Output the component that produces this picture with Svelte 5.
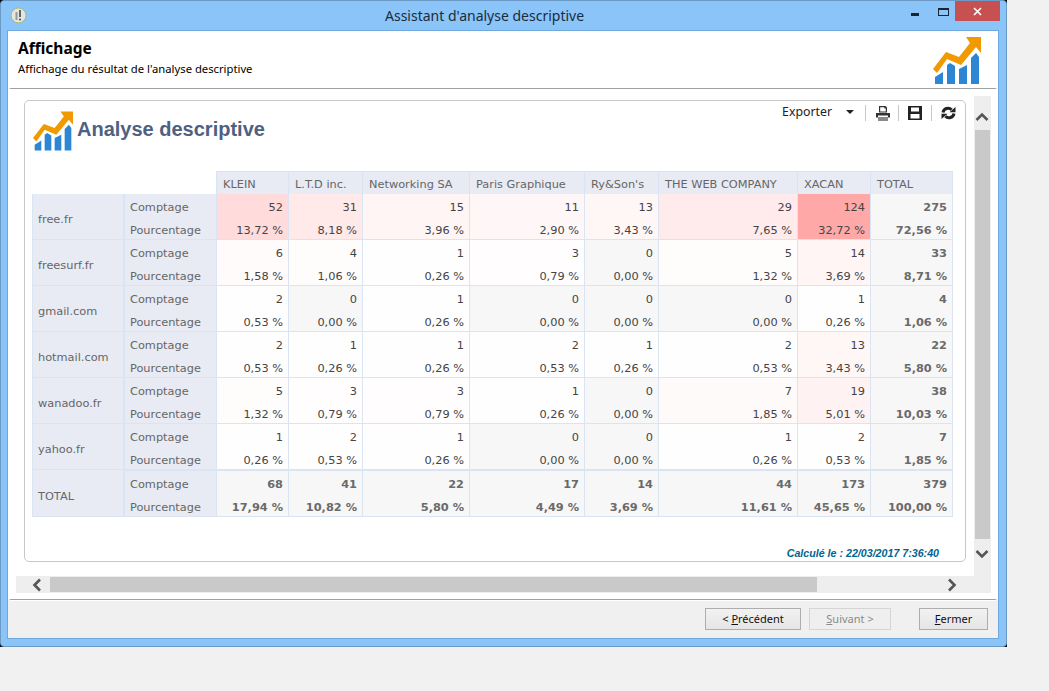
<script>
  const columns = ['KLEIN', 'L.T.D inc.', 'Networking SA', 'Paris Graphique', "Ry&Son's", 'THE WEB COMPANY', 'XACAN', 'TOTAL'];
  const rows = [
    { name: 'free.fr', count: [52, 31, 15, 11, 13, 29, 124, 275], pct: ['13,72', '8,18', '3,96', '2,90', '3,43', '7,65', '32,72', '72,56'] },
    { name: 'freesurf.fr', count: [6, 4, 1, 3, 0, 5, 14, 33], pct: ['1,58', '1,06', '0,26', '0,79', '0,00', '1,32', '3,69', '8,71'] },
    { name: 'gmail.com', count: [2, 0, 1, 0, 0, 0, 1, 4], pct: ['0,53', '0,00', '0,26', '0,00', '0,00', '0,00', '0,26', '1,06'] },
    { name: 'hotmail.com', count: [2, 1, 1, 2, 1, 2, 13, 22], pct: ['0,53', '0,26', '0,26', '0,53', '0,26', '0,53', '3,43', '5,80'] },
    { name: 'wanadoo.fr', count: [5, 3, 3, 1, 0, 7, 19, 38], pct: ['1,32', '0,79', '0,79', '0,26', '0,00', '1,85', '5,01', '10,03'] },
    { name: 'yahoo.fr', count: [1, 2, 1, 0, 0, 1, 2, 7], pct: ['0,26', '0,53', '0,26', '0,00', '0,00', '0,26', '0,53', '1,85'] },
    { name: 'TOTAL', total: true, count: [68, 41, 22, 17, 14, 44, 173, 379], pct: ['17,94', '10,82', '5,80', '4,49', '3,69', '11,61', '45,65', '100,00'] }
  ];
  const widths = [93, 92, 72, 74, 107, 115, 74, 139, 73, 82];
  function heat(v) {
    if (v === 0) return '#f7f7f7';
    const c = Math.round(255 - 0.7 * v);
    return `rgb(255,${c},${c})`;
  }
  function bg(row, i, v) {
    if (row.total || i === 7) return '#f7f7f7';
    return heat(v);
  }
</script>

{#snippet trend(w, h)}
  <svg width={w} height={h} viewBox="0 0 48 47" aria-hidden="true">
    <g fill="#2d86d3">
      <path d="M2 47V40L10 35V47Z" />
      <path d="M14 47V28L17 26L22 29V47Z" />
      <path d="M26 47V32L34 28V47Z" />
      <path d="M38 47V21L43 16L46 20V47Z" />
    </g>
    <path fill="#f09a00" d="M33 0H48V16L43 10L28 28L14 22L4 36L0 32L13 15L26 20L37 6Z" />
  </svg>
{/snippet}

<div class="window">
  <div class="frame">
    <div class="titlebar">
      <svg class="appicon" width="17" height="17" viewBox="0 0 17 17" aria-hidden="true">
        <circle cx="8.5" cy="8.5" r="7.5" fill="#e6e6e0" stroke="#9fbf6a" />
        <path d="M6.5 5V13" stroke="#999" stroke-width="2" fill="none" />
        <path d="M10 3V10" stroke="#444" stroke-width="1.6" fill="none" />
        <circle cx="10" cy="12.5" r="1" fill="#444" />
      </svg>
      <span class="wintitle">Assistant d'analyse descriptive</span>
      <div class="winbtns">
        <span class="min"></span>
        <span class="max"></span>
        <span class="close">
          <svg width="9" height="9" viewBox="0 0 9 9" aria-hidden="true"><path d="M1 1L8 8M8 1L1 8" stroke="#fff" stroke-width="1.7" /></svg>
        </span>
      </div>
    </div>

    <div class="client">
      <header class="head">
        <div>
          <h1>Affichage</h1>
          <p>Affichage du résultat de l'analyse descriptive</p>
        </div>
        {@render trend(48, 47)}
      </header>
      <div class="rule"></div>

      <div class="scroller">
        <div class="viewport">
          <section class="card">
            <div class="toolbar">
              <span class="exporter">Exporter</span>
              <span class="caret"></span>
              <span class="sep first"></span>
              <svg class="tool print" width="14" height="15" viewBox="0 0 14 15" aria-hidden="true">
                <path fill="#333" fill-rule="evenodd" d="M3 0H9.5L11 1.5V6.5H3ZM4.2 1.2V5.5H9.8V2.5H8.3V1.2Z" />
                <path fill="#333" d="M0 7H14V11.5H12V9.5H2V11.5H0Z" />
                <path fill="#8a8a8a" d="M2 11H12V15H2Z" />
              </svg>
              <span class="sep"></span>
              <svg class="tool" width="14" height="14" viewBox="0 0 14 14" aria-hidden="true">
                <path fill="#222" fill-rule="evenodd" d="M0 0H14V14H0ZM3 1.5V5.5H11V1.5ZM2.5 8V12.5H11.5V8Z" />
              </svg>
              <span class="sep"></span>
              <svg class="tool" width="15" height="14" viewBox="0 0 15 14" aria-hidden="true">
                <path fill="none" stroke="#222" stroke-width="3" d="M2 6.5A5 5 0 0 1 10.6 3.8M13 7.5A5 5 0 0 1 4.4 10.2" />
                <path fill="#222" d="M8.5 6.3L14.5 1V6.3ZM6.5 7.7L.5 13V7.7Z" />
              </svg>
            </div>

            <div class="brand">
              {@render trend(40, 40)}
              <h2>Analyse descriptive</h2>
            </div>

            <table>
              <colgroup>
                {#each widths as w}
                  <col style="width:{w}px" />
                {/each}
              </colgroup>
              <thead>
                <tr>
                  <th class="blank" colspan="2"></th>
                  {#each columns as c}
                    <th>{c}</th>
                  {/each}
                </tr>
              </thead>
              <tbody>
                {#each rows as row}
                  <tr class:tot={row.total}>
                    <td class="lab name" rowspan="2">{row.name}</td>
                    <td class="lab sub up">Comptage</td>
                    {#each row.count as v, i}
                      <td class="num up" class:bold={row.total || i === 7} style="background:{bg(row, i, v)}">{v}</td>
                    {/each}
                  </tr>
                  <tr class:tot={row.total}>
                    <td class="lab sub down">Pourcentage</td>
                    {#each row.pct as p, i}
                      <td class="num down" class:bold={row.total || i === 7} style="background:{bg(row, i, row.count[i])}">{p} %</td>
                    {/each}
                  </tr>
                {/each}
              </tbody>
            </table>

            <div class="stamp">Calculé le : 22/03/2017 7:36:40</div>
          </section>
          <div class="vbar">
            <svg class="arrow-up" width="14" height="10" viewBox="0 0 14 10" aria-hidden="true"><path d="M1.5 8L7 2.5L12.5 8" fill="none" stroke="#555" stroke-width="2.6" /></svg>
            <span class="vthumb"></span>
            <svg class="arrow-down" width="14" height="10" viewBox="0 0 14 10" aria-hidden="true"><path d="M1.5 2L7 7.5L12.5 2" fill="none" stroke="#555" stroke-width="2.6" /></svg>
          </div>
        </div>
        <div class="hbar">
          <svg class="arrow-left" width="10" height="14" viewBox="0 0 10 14" aria-hidden="true"><path d="M8 1.5L2.5 7L8 12.5" fill="none" stroke="#555" stroke-width="2.6" /></svg>
          <span class="hthumb"></span>
          <svg class="arrow-right" width="10" height="14" viewBox="0 0 10 14" aria-hidden="true"><path d="M2 1.5L7.5 7L2 12.5" fill="none" stroke="#555" stroke-width="2.6" /></svg>
        </div>
      </div>

      <footer class="foot">
        <button class="prev">&lt; <u>P</u>récédent</button>
        <button class="next" disabled><u>S</u>uivant &gt;</button>
        <button class="closebtn"><u>F</u>ermer</button>
      </footer>
    </div>
  </div>
</div>

<style>
  :global(body) {
    margin: 0;
    background: #f1f1f1;
  }
  h1, h2, p { margin: 0; }

  .window {
    width: 1007px;
    height: 647px;
    background: #000;
  }
  .frame {
    box-sizing: border-box;
    width: 100%;
    height: 100%;
    display: flex;
    flex-direction: column;
    background: #8ac4f8;
    border: 1px solid #6b9ac6;
    border-radius: 4px;
    padding: 0 7px 7px 6px;
  }
  .titlebar {
    height: 29px;
    flex: none;
    display: flex;
    align-items: center;
    position: relative;
  }
  .appicon { margin: 0 0 0 3px; }
  .wintitle {
    position: absolute;
    left: 378px;
    top: 6px;
    font: 14px/18px "Noto Sans", sans-serif;
    color: #1c2c3c;
  }
  .winbtns {
    position: absolute;
    right: -1px;
    top: 0;
    display: flex;
    height: 21px;
  }
  .min {
    position: absolute;
    right: 81px;
    top: 12px;
    width: 8px;
    height: 3px;
    background: #1a2530;
  }
  .max {
    position: absolute;
    right: 51px;
    top: 7px;
    box-sizing: border-box;
    width: 11px;
    height: 8px;
    border: 1px solid #1a2530;
    border-top-width: 2px;
  }
  .close {
    width: 45px;
    height: 20px;
    background: #c75050;
    display: flex;
    align-items: center;
    justify-content: center;
  }

  .client {
    flex: 1;
    min-height: 0;
    display: flex;
    flex-direction: column;
    background: #f0f0f0;
    border: 1px solid #6fa8dc;
  }
  .head {
    height: 57px;
    flex: none;
    background: #fff;
    box-sizing: border-box;
    padding: 7px 17px 0 10px;
    display: flex;
    justify-content: space-between;
    align-items: flex-start;
  }
  .head svg { margin-top: -1px; }
  .head h1 {
    font: bold 15.5px/20px "Noto Sans", sans-serif;
    color: #000;
  }
  .head p {
    font: 11.25px/16px "Noto Sans", sans-serif;
    color: #000;
    margin-top: 3px;
  }
  .rule {
    height: 1px;
    flex: none;
    background: #a0a0a0;
    margin: 0 2px 0 2px;
  }

  .scroller {
    flex: none;
    background: #fff;
    padding: 7px 6px 6px 8px;
    height: 497px;
    box-sizing: content-box;
  }
  .viewport {
    display: flex;
    height: 480px;
  }
  .card {
    box-sizing: border-box;
    position: relative;
    width: 942px;
    height: 462px;
    margin: 4px 8px 0 8px;
    border: 1px solid #c8c8c8;
    border-radius: 5px;
    padding: 10px 0 0 8px;
  }
  .toolbar {
    position: absolute;
    top: 4px;
    right: 0;
    height: 16px;
    display: flex;
    align-items: center;
  }
  .exporter {
    font: 12.3px/16px "Noto Sans", sans-serif;
    color: #222;
    margin-top: -2px;
  }
  .caret {
    margin-left: 14px;
    width: 0;
    height: 0;
    border: 4px solid transparent;
    border-top: 4px solid #222;
    border-bottom: 0;
    margin-top: -2px;
  }
  .sep {
    width: 1px;
    height: 16px;
    background: #c8c8c8;
    margin: 0 9px 0 9px;
  }
  .sep.first { margin-left: 11px; margin-right: 10px; }
  .tool { flex: none; }
  .tool.print { margin-right: -1px; }
  .tool:last-child { margin-right: 9px; }

  .brand {
    display: flex;
    align-items: center;
    height: 40px;
    gap: 4px;
  }
  .brand h2 {
    font: bold 20px/24px "Liberation Sans", sans-serif;
    color: #4e6180;
    margin-top: -4px;
  }

  table {
    table-layout: fixed;
    width: 921px;
    margin: 20px 0 0 -1px;
    border-collapse: separate;
    border-spacing: 0;
    font: 11.33px/14px "DejaVu Sans", sans-serif;
  }
  th {
    height: 23px;
    box-sizing: border-box;
    padding: 2px 0 0 6px;
    background: #e8ebf3;
    border-top: 1px solid #dbe4f2;
    border-right: 1px solid #dbe4f2;
    border-left: 1px solid #dbe4f2;
    font-weight: normal;
    color: #666;
    text-align: left;
    white-space: nowrap;
    overflow: hidden;
  }
  th + th { border-left: 0; }
  th.blank {
    background: #fff;
    border: 0;
    border-right: 1px solid #dbe4f2;
  }
  td {
    height: 23px;
    box-sizing: border-box;
    padding: 3px 0 0;
    border-right: 1px solid #dbe4f2;
  }
  td.down { border-bottom: 1px solid #dbe4f2; }
  .tot td.up { border-top: 1px solid #dbe4f2; height: 24px; }
  .lab {
    background: #e8ebf3;
    color: #666;
    padding-left: 5px;
    white-space: nowrap;
  }
  .lab.down { padding-top: 3px; }
  .name {
    border-left: 1px solid #dbe4f2;
    border-right-width: 2px;
    border-bottom: 1px solid #dbe4f2;
    padding-top: 4px;
  }
  .tot .name { padding-top: 6px; }
  .num {
    text-align: right;
    padding-right: 5px;
    color: #444;
    white-space: nowrap;
  }
  .num.down { padding-top: 3px; }
  .num.bold {
    font-weight: bold;
    color: #6a6a6a;
  }

  .stamp {
    position: absolute;
    right: 26px;
    bottom: 1px;
    font: italic bold 10.67px/14px "Liberation Sans", sans-serif;
    color: #00648f;
  }

  .vbar {
    width: 17px;
    height: 480px;
    flex: none;
    background: #eee;
    position: relative;
  }
  .vthumb {
    position: absolute;
    left: 1px;
    top: 34px;
    width: 15px;
    height: 409px;
    background: #c9c9c9;
  }
  .arrow-up { position: absolute; left: 1px; top: 16px; }
  .arrow-down { position: absolute; left: 1px; top: 453px; }

  .hbar {
    height: 17px;
    width: 975px;
    background: #eee;
    position: relative;
  }
  .hthumb {
    position: absolute;
    left: 34px;
    top: 1px;
    width: 767px;
    height: 15px;
    background: #c9c9c9;
  }
  .arrow-left { position: absolute; left: 16px; top: 2px; }
  .arrow-right { position: absolute; left: 931px; top: 2px; }

  .foot {
    flex: 1;
    background: #f0f0f0;
    border-top: 1px solid #a0a0a0;
    box-shadow: inset 0 1px 0 #fff;
    margin: 0 2px;
    display: flex;
    align-items: flex-start;
    padding: 8px 8px 0 0;
    justify-content: flex-end;
  }
  button {
    box-sizing: border-box;
    height: 22px;
    padding: 0;
    border: 1px solid #adadad;
    background: linear-gradient(#f2f2f2, #e5e5e5);
    font: 11px/18px "Noto Sans", sans-serif;
    color: #111;
  }
  .prev { width: 96px; margin-right: 8px; }
  .next {
    width: 82px;
    margin-right: 28px;
    color: #8a8a8a;
    border-color: #d5d5d5;
    background: #efefef;
  }
  .closebtn { width: 69px; }
</style>
